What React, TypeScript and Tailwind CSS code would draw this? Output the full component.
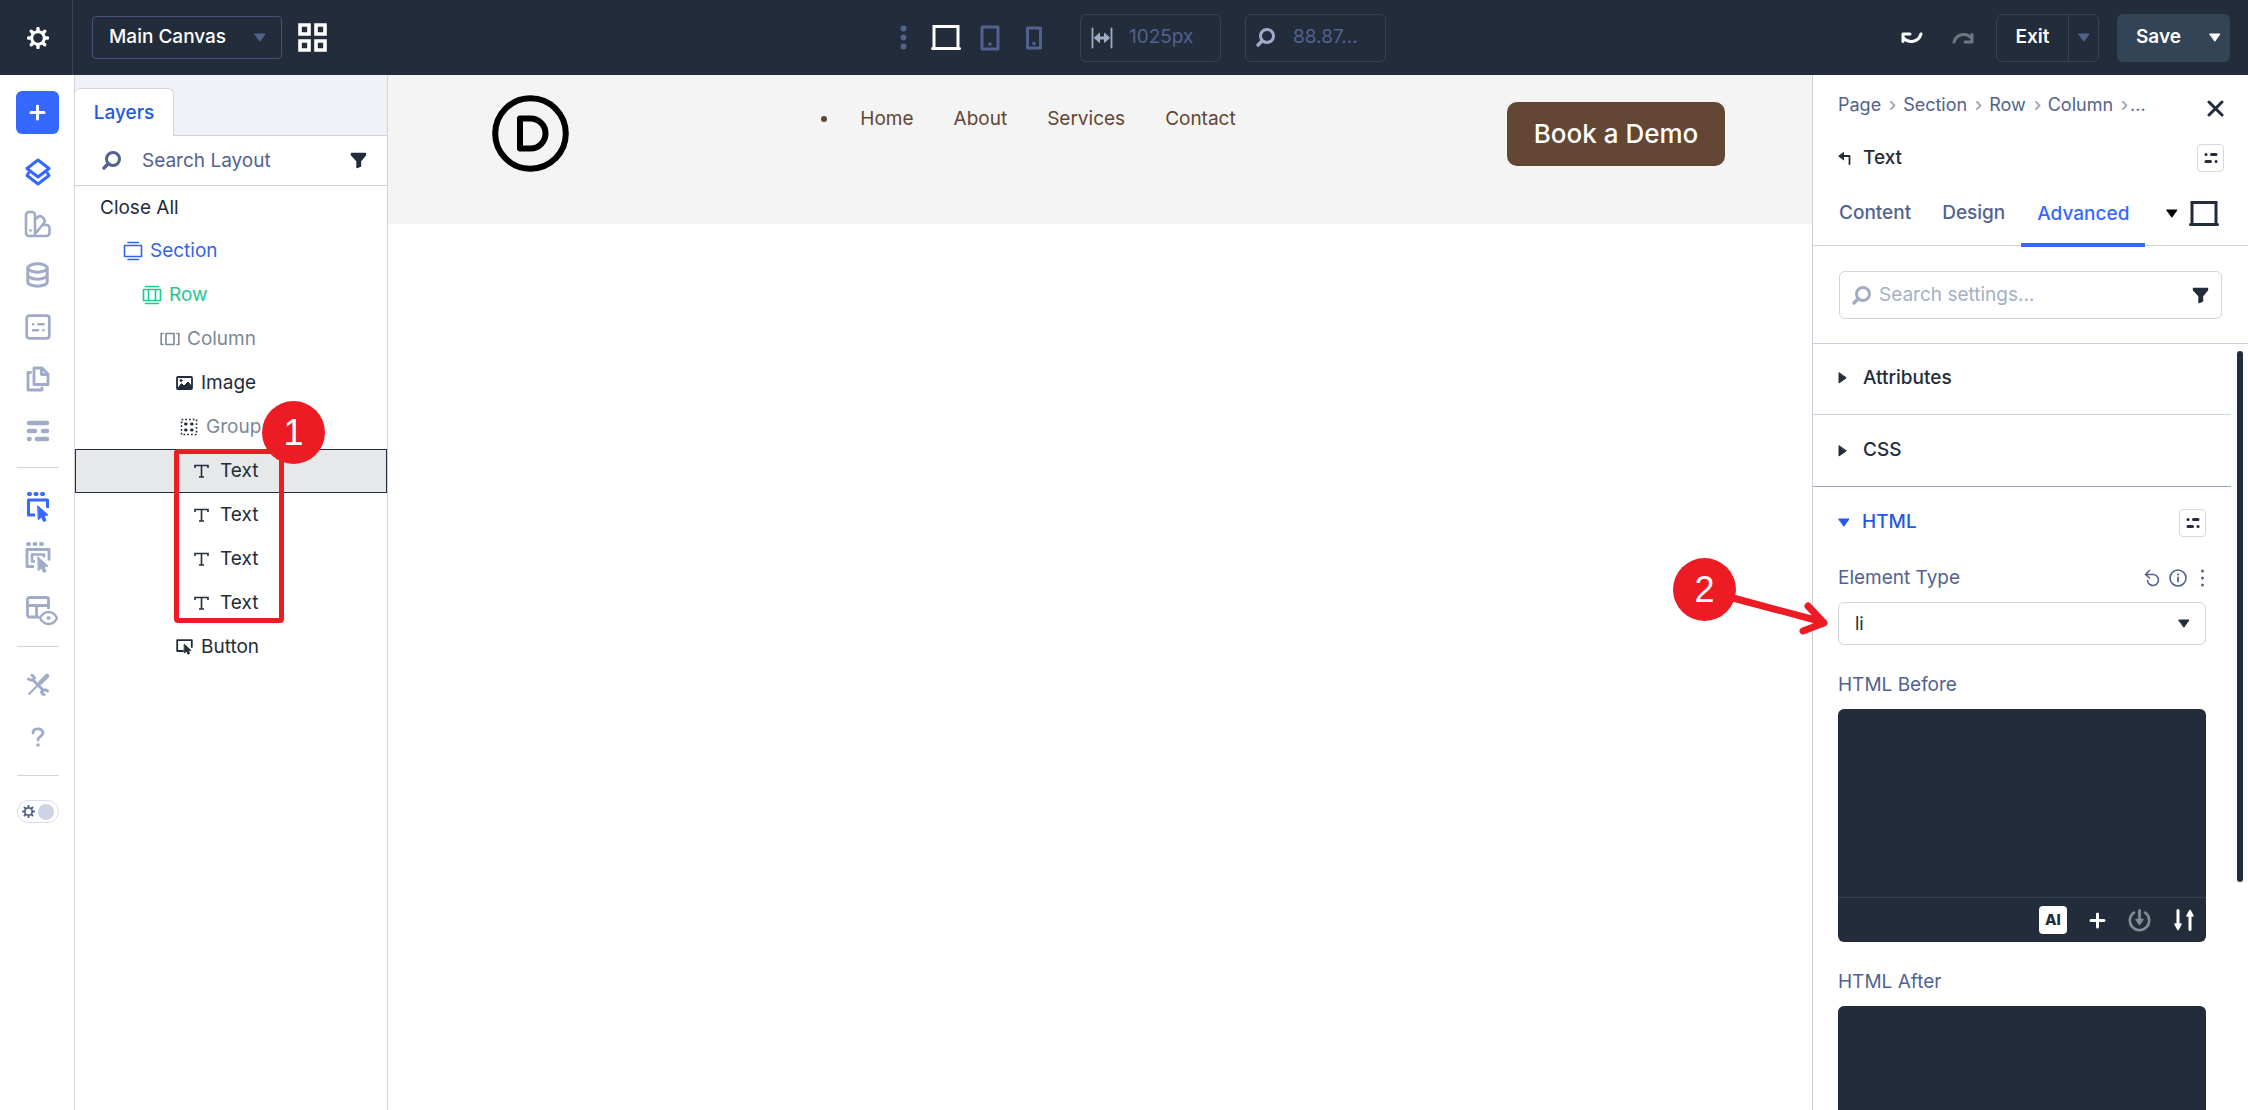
import type { ReactNode } from 'react';

interface IconProps {
  w?: number;
  h?: number;
  box: string;
  className?: string;
  children: ReactNode;
}

const Icon = ({ w = 22, h = w, box, className = '', children }: IconProps) => (
  <svg
    width={w}
    height={h}
    viewBox={box}
    fill="none"
    stroke="currentColor"
    strokeWidth={3}
    strokeLinejoin="round"
    strokeLinecap="round"
    className={`shrink-0 ${className}`}
    aria-hidden="true"
  >
    {children}
  </svg>
);

const Caret = ({ className = '' }: { className?: string }) => (
  <Icon w={12} h={9} box="0 0 12 9" className={className}>
    <path d="M1 1h10L6 8z" fill="currentColor" strokeWidth={1} />
  </Icon>
);

const CaretRight = () => (
  <Icon w={9} h={12} box="0 0 9 12">
    <path d="M1 1v10l7-5z" fill="currentColor" strokeWidth={1} />
  </Icon>
);

const SearchIcon = ({ className = '' }: { className?: string }) => (
  <Icon w={19} box="0 0 19 19" className={className}>
    <circle cx="11" cy="8" r="6.5" />
    <path d="M6 13l-4 4" strokeWidth={3.4} />
  </Icon>
);

const Funnel = ({ className = '' }: { className?: string }) => (
  <Icon w={17} box="0 0 17 17" className={className}>
    <path d="M1.500 1.500h14v1.500L10.500 9v5L7 15.500V9L1.500 3z" fill="currentColor" strokeWidth={1.400} />
  </Icon>
);

const Laptop = () => (
  <Icon w={30} h={27} box="0 0 30 27">
    <path d="M3 24V2.500h24V24M1.500 24.500h27" strokeLinejoin="miter" />
  </Icon>
);

const Gear = ({ size = 22 }: { size?: number }) => (
  <Icon w={size} box="0 0 22 22">
    <circle cx="11" cy="11" r="6.300" />
    <path
      d="M11 1.500v2M11 18.500v2M1.500 11h2M18.500 11h2M4.300 4.300l1.400 1.400M16.300 16.300l1.400 1.400M4.300 17.700l1.400-1.400M16.300 5.700l1.400-1.400"
      strokeWidth={3.400}
    />
  </Icon>
);

const PresetIcon = () => (
  <Icon w={14} h={12} box="0 0 14 12">
    <path d="M2 2.500h.1M7.500 2.500h4.500M2 9.500h4.500M12 9.500h.1" />
  </Icon>
);

const Chevron = () => (
  <Icon w={6} h={9} box="0 0 6 9" className="text-[#a3adc2]">
    <path d="M1 1l3.500 3.500L1 8" strokeWidth={2} />
  </Icon>
);

const Plus = () => (
  <Icon w={17} box="0 0 17 17">
    <path d="M8.500 2v13M2 8.500h13" />
  </Icon>
);

const TextIcon = () => (
  <Icon w={15} h={14} box="0 0 15 14">
    <path d="M1 4V1.500h13V4M7.500 1.500v11M5 13h5" strokeWidth={1.600} strokeLinejoin="miter" strokeLinecap="butt" />
  </Icon>
);

const layers = [
  {
    name: 'Section',
    pad: 'pl-12',
    gap: 'gap-[7px]',
    color: 'text-[#3563e9]',
    icon: (
      <Icon w={20} box="0 0 20 20">
        <path d="M5 1.500h10.500M5 18.500h10.500M1.500 4.500h17v11h-17z" strokeWidth={1.600} />
      </Icon>
    ),
  },
  {
    name: 'Row',
    pad: 'pl-[67px]',
    gap: 'gap-[7px]',
    color: 'text-[#1ec98e]',
    icon: (
      <Icon w={20} box="0 0 20 20">
        <path d="M3.500 1.500h13M3.500 18.500h13M1.500 4.500h17v11h-17zM6.500 4.500v11M13.500 4.500v11" strokeWidth={1.600} />
      </Icon>
    ),
  },
  {
    name: 'Column',
    pad: 'pl-[85px]',
    gap: 'gap-[7px]',
    color: 'text-[#7d8899]',
    icon: (
      <Icon w={20} h={14} box="0 0 20 14">
        <path d="M3 1.500H1.200v11H3M17 1.500h1.800v11H17M6 1.500h8v11H6z" strokeWidth={1.600} />
      </Icon>
    ),
  },
  {
    name: 'Image',
    pad: 'pl-[101px]',
    gap: 'gap-2',
    color: 'text-[#232c3a]',
    icon: (
      <Icon w={17} h={14} box="0 0 17 14">
        <rect x="1" y="1" width="15" height="12" rx="1" strokeWidth={1.800} />
        <path d="M2 12l3.500-4.500L8 10l4-4 3.500 4v2z" fill="currentColor" strokeWidth={1} />
        <circle cx="5" cy="4.500" r="1" fill="currentColor" strokeWidth={1} />
      </Icon>
    ),
  },
  {
    name: 'Group',
    pad: 'pl-[105px]',
    gap: 'gap-2',
    color: 'text-[#7d8899]',
    icon: (
      <Icon w={18} box="0 0 18 18" className="text-[#232c3a]">
        <rect x="1.500" y="1.500" width="15" height="15" strokeWidth={1.600} strokeDasharray="1.750 2" strokeLinecap="butt" />
        <path d="M5 5h2v2H5zM11 5h2v2h-2zM5 11h2v2H5zM11 11h2v2h-2z" fill="currentColor" strokeWidth={0.800} />
      </Icon>
    ),
  },
];

const railIcons: { label: string; active?: boolean; height: string; icon: ReactNode }[] = [
  {
    label: 'Layers',
    active: true,
    height: 'h-[52px]',
    icon: (
      <Icon w={26} h={28} box="0 0 26 28">
        <path d="M13 2l11 8.500L13 19 2 10.500z" />
        <path d="M3.500 15L2 17.500 13 26l11-8.500-1.500-2.500" />
      </Icon>
    ),
  },
  {
    label: 'Design variables',
    height: 'h-[51px]',
    icon: (
      <Icon w={28} box="0 0 28 28">
        <path d="M2 5a3 3 0 0 1 3-3h3a3 3 0 0 1 3 3v21H5a3 3 0 0 1-3-3zM11 9.500l3-2.500a3 3 0 0 1 4 0l2 2a3 3 0 0 1 0 4L11 24M19 15h3.500a3 3 0 0 1 3 3v5a3 3 0 0 1-3 3H11" strokeWidth={2.600} />
        <circle cx="6.500" cy="20.500" r="1" fill="currentColor" strokeWidth={1} />
      </Icon>
    ),
  },
  {
    label: 'Data',
    height: 'h-[52px]',
    icon: (
      <Icon w={23} h={26} box="0 0 23 26">
        <ellipse cx="11.500" cy="6" rx="9.700" ry="4.200" />
        <path d="M1.800 6v14c0 2.300 4.300 4.200 9.700 4.200s9.700-1.900 9.700-4.200V6M1.800 13c0 2.300 4.300 4.200 9.700 4.200s9.700-1.900 9.700-4.200" />
      </Icon>
    ),
  },
  {
    label: 'Presets',
    height: 'h-[52px]',
    icon: (
      <Icon w={26} box="0 0 26 26">
        <rect x="1.700" y="1.700" width="22.600" height="22.600" rx="2.500" strokeWidth={2.800} />
        <path d="M8 10.300h.1M13.500 10.300h5M8 16.300h5M18.300 16.300h.1" strokeWidth={2.600} />
      </Icon>
    ),
  },
  {
    label: 'Pages',
    height: 'h-[51px]',
    icon: (
      <Icon w={24} h={26} box="0 0 24 26">
        <path d="M8 2h8l6 6v10.500H8zM15.500 2.500V8.500H22" strokeWidth={2.800} />
        <path d="M4.500 6.500H2V24h14v-2" strokeWidth={2.800} />
      </Icon>
    ),
  },
  {
    label: 'Wireframe',
    height: 'h-[53px]',
    icon: (
      <Icon w={24} box="0 0 24 24">
        <path d="M3 4h18M3 12h6M17 12h4M3 20h.5M11 20h10" strokeWidth={4.600} />
      </Icon>
    ),
  },
];

const HoverSelect = () => (
  <Icon w={24} h={32} box="0 0 24 32">
    <path d="M3 3h1M9.500 3h1M16 3h1" strokeWidth={4} />
    <path d="M9 24H2.500V9h19v8" strokeLinecap="butt" />
    <path d="M12 15l10 9-4 .5 2 5-2.500 1-2-4.500-3 2.500z" fill="currentColor" strokeWidth={1} />
  </Icon>
);

const HoverParent = () => (
  <Icon w={26} h={33} box="0 0 26 33">
    <path d="M3 3h1M9.500 3h1M16 3h1" strokeWidth={4} />
    <path d="M9 25.500H2V8.500h22v11" strokeWidth={2.800} strokeLinecap="butt" />
    <path d="M10 20.500H7v-7h12v3" strokeWidth={2.600} strokeLinecap="butt" />
    <path d="M13 16l10 9-4 .5 2 5-2.500 1-2-4.500-3 2.500z" fill="currentColor" strokeWidth={1} />
  </Icon>
);

const LayoutEye = () => (
  <Icon w={32} h={30} box="0 0 32 30">
    <path d="M12 21H3.500a2 2 0 0 1-2-2V3.500a2 2 0 0 1 2-2h17a2 2 0 0 1 2 2V12M1.500 9.500h21M10.500 9.500V21" strokeWidth={2.800} />
    <path d="M14 22c2-4 5-6 8.500-6s6.500 2 8.500 6c-2 4-5 6-8.500 6s-6.500-2-8.500-6z" strokeWidth={2.400} />
    <circle cx="22.500" cy="22" r="1.500" fill="currentColor" strokeWidth={1} />
  </Icon>
);

const Tools = () => (
  <Icon w={24} box="0 0 24 24">
    <path d="M21 3L10 14M3 21l7-7" strokeWidth={2} />
    <path d="M21 3l-6.500 6.500" strokeWidth={4.500} />
    <path d="M7.500 7.500L17 17" strokeWidth={3} />
    <path d="M2.500 6a3.800 3.800 0 0 0 6-1A3.800 3.800 0 0 0 6 2.300M21.500 18a3.800 3.800 0 0 0-6 1 3.800 3.800 0 0 0 2.500 2.700" strokeWidth={3} />
  </Icon>
);

const Rail = () => (
  <nav className="flex w-[75px] shrink-0 flex-col items-center border-r border-[#d0d4dd] bg-white pt-4 pl-px text-[#a0abc8]">
    <button aria-label="Add" className="flex h-[43px] w-[43px] items-center justify-center rounded-md bg-[#3468ff] text-white">
      <Plus />
    </button>
    <div className="mt-3 flex flex-col">
      {railIcons.map((item) => (
        <button
          key={item.label}
          aria-label={item.label}
          className={`flex w-12 items-center justify-center ${item.height} ${item.active ? 'text-[#3468ff]' : ''}`}
        >
          {item.icon}
        </button>
      ))}
    </div>
    <hr className="mt-[10px] w-[42px] border-[#d0d4dd]" />
    <div className="mt-3 flex flex-col items-center">
      <button aria-label="Click mode" className="flex h-[54px] items-center text-[#3468ff]">
        <HoverSelect />
      </button>
      <button aria-label="Grid mode" className="flex h-[46px] items-center">
        <HoverParent />
      </button>
      <button aria-label="Preview mode" className="flex h-[62px] items-center pl-2">
        <LayoutEye />
      </button>
    </div>
    <hr className="mt-1 w-[42px] border-[#d0d4dd]" />
    <button aria-label="Tools" className="mt-3 flex h-[52px] items-center">
      <Tools />
    </button>
    <button aria-label="Help" className="flex h-[52px] items-center">
      <Icon w={14} h={20} box="0 0 14 20">
        <path d="M2 6c0-2.600 2-4.200 5-4.200s5 1.700 5 4.200c0 3.300-5 3.500-5 7" strokeWidth={2.800} />
        <path d="M7 18h.1" strokeWidth={3.400} />
      </Icon>
    </button>
    <hr className="mt-3 w-[42px] border-[#d0d4dd]" />
    <label className="mt-6 flex h-[23px] w-[42px] items-center justify-between rounded-full border border-[#d8dce6] px-1 text-[#52628f]">
      <input type="checkbox" aria-label="Dark mode" className="sr-only" />
      <Gear size={13} />
      <span className="h-4 w-4 rounded-full bg-[#ccd4e6]" />
    </label>
  </nav>
);

const LayersPanel = () => (
  <aside className="flex w-[313px] shrink-0 flex-col border-r border-[#d0d4dd] bg-white">
    <div className="flex h-[61px] items-end bg-[#f0f2f7]">
      <button className="h-12 w-[99px] rounded-t-md border-t border-r border-[#d0d4dd] bg-white pt-0.5 text-[19px] font-medium text-[#2558e0]">
        Layers
      </button>
      <div className="flex-1 self-stretch border-b border-[#d0d4dd]" />
    </div>
    <label className="flex h-[50px] items-center border-b border-[#c9ced8] pr-5 pl-[27px]">
      <SearchIcon className="text-[#52628f]" />
      <input
        aria-label="Search Layout"
        placeholder="Search Layout"
        className="ml-[21px] min-w-0 flex-1 pt-0.5 text-[19px] outline-none placeholder:text-[#52628f]"
      />
      <Funnel className="text-[#232c3a]" />
    </label>
    <div className="flex flex-col text-[19px] text-[#232c3a]">
      <button className="h-[43px] pt-0.5 pl-[25px] text-left">Close All</button>
      {layers.map((layer) => (
        <button key={layer.name} className={`flex h-11 items-center ${layer.pad} ${layer.gap} ${layer.color}`}>
          {layer.icon}
          {layer.name}
        </button>
      ))}
      <div className="relative flex flex-col">
        {[0, 1, 2, 3].map((i) => (
          <button
            key={i}
            className={`flex h-11 items-center gap-[11px] border pl-[118px] ${i === 0 ? 'border-[#232c3a] bg-[#e6e8ea]' : 'border-transparent'}`}
          >
            <TextIcon />
            Text
          </button>
        ))}
        <div className="pointer-events-none absolute top-0 left-[99px] h-[174px] w-[110px] rounded-sm border-[5px] border-[#ed1c24]" />
        <div className="absolute -top-12 left-[187px] flex h-[63px] w-[63px] items-center justify-center rounded-full bg-[#ed1c24] font-['Liberation_Sans',sans-serif] text-[36px] text-white">
          1
        </div>
      </div>
      <button className="flex h-11 items-center gap-2 pl-[101px]">
        <Icon w={17} h={16} box="0 0 17 16">
          <path d="M7 12H1.200V1.200h14.600V8" strokeWidth={1.800} />
          <path d="M8.500 5.500l6.500 6-2.700.3 1.200 2.800-1.500.6-1.300-3-2.200 1.500z" fill="currentColor" strokeWidth={1} />
        </Icon>
        Button
      </button>
    </div>
  </aside>
);

const Canvas = () => (
  <main className="min-w-0 flex-1 bg-white">
    <header className="flex items-center justify-between bg-[#f4f4f4] pt-5 pr-[87px] pb-[52px] pl-[104px]">
      <svg width="77" height="77" viewBox="0 0 77 77" fill="none" stroke="#000" strokeWidth="6" aria-label="Logo">
        <circle cx="38.500" cy="38.500" r="35.300" />
        <path d="M28 23.500h10.500a15 15 0 0 1 0 30H28z" strokeWidth="6" strokeLinejoin="round" />
      </svg>
      <ul className="flex gap-10 self-start py-3 text-[19px] leading-6 text-[#634633]">
        <li className="list-disc pl-5">
          <a href="#home">Home</a>
        </li>
        <li className="list-none">
          <a href="#about">About</a>
        </li>
        <li className="list-none">
          <a href="#services">Services</a>
        </li>
        <li className="list-none">
          <a href="#contact">Contact</a>
        </li>
      </ul>
      <a href="#demo" className="flex h-16 w-[218px] items-center justify-center rounded-[10px] bg-[#634633] text-[26px] font-medium text-white">
        Book a Demo
      </a>
    </header>
  </main>
);

const CodeToolbar = () => (
  <div className="flex h-[45px] items-center justify-end gap-[22px] border-t border-[#37414f] pr-[11px] text-white">
    <button aria-label="AI" className="h-7 w-7 rounded bg-white text-[15px] leading-7 font-extrabold text-[#232c3a]">
      AI
    </button>
    <button aria-label="Add">
      <Plus />
    </button>
    <button aria-label="Save" className="text-[#858b94]">
      <Icon w={23} box="0 0 23 23">
        <path d="M6 3.500a9.700 9.700 0 1 0 11 0" strokeWidth={2.600} />
        <path d="M11.500 1.500v10" strokeWidth={2.800} />
        <path d="M8 10.500h7l-3.500 5z" fill="currentColor" strokeWidth={1.400} />
      </Icon>
    </button>
    <button aria-label="Sort">
      <Icon w={22} h={24} box="0 0 22 24">
        <path d="M5 2.500v14M17 21.500v-14" />
        <path d="M2 16h6l-3 5.500zM14 8h6l-3-5.500z" fill="currentColor" strokeWidth={1.600} />
      </Icon>
    </button>
  </div>
);

const CodeField = ({ label, id, toolbar = false }: { label: string; id: string; toolbar?: boolean }) => (
  <div className="flex flex-col">
    <label htmlFor={id} className="text-[19px] leading-6">
      {label}
    </label>
    <div className="mt-3 rounded-md bg-[#232c3a]">
      <textarea id={id} className="block h-[188px] w-full resize-none p-3 text-white outline-none" />
      {toolbar && <CodeToolbar />}
    </div>
  </div>
);

const crumbs = ['Page', 'Section', 'Row', 'Column'];

const SettingsPanel = () => (
  <aside className="flex w-[436px] shrink-0 flex-col border-l border-[#c9ced8] bg-white text-[#52628f]">
    <div className="flex items-start justify-between pt-[18px] pr-6 pl-[25px]">
      <div className="flex items-center text-lg leading-6">
        {crumbs.map((crumb) => (
          <div key={crumb} className="flex items-center">
            <a href="#layer">{crumb}</a>
            <span className={crumb === 'Column' ? 'pr-0.5 pl-[9px]' : 'pr-[7px] pl-[9px]'}>
              <Chevron />
            </span>
          </div>
        ))}
        <span>...</span>
      </div>
      <button aria-label="Close" className="mt-[7px] text-[#232c3a]">
        <Icon w={17} box="0 0 17 17">
          <path d="M2 2l13 13M15 2L2 15" />
        </Icon>
      </button>
    </div>
    <div className="mt-[27px] flex items-center justify-between pr-6 pl-[25px] text-[#232c3a]">
      <h2 className="flex items-center gap-3 text-[19px] leading-7 font-medium">
        <Icon w={13} h={14} box="0 0 13 14">
          <path d="M2 5h9.500v8" strokeWidth={1.800} />
          <path d="M1 5l4.500-3.500v7z" fill="currentColor" strokeWidth={1} />
        </Icon>
        Text
      </h2>
      <button aria-label="Presets" className="flex h-7 w-[27px] items-center justify-center rounded border border-[#d3d8e2]">
        <PresetIcon />
      </button>
    </div>
    <div className="mt-2 flex h-[66px] border-b border-[#d0d4dd] pr-[29px] pl-[26px] text-[19px] font-medium">
      <button className="pt-0.5">Content</button>
      <button className="ml-[31px] pt-0.5">Design</button>
      <button className="-mb-0.5 ml-4 border-b-4 border-[#3468ff] px-4 pt-1.5 text-[#3468ff]">Advanced</button>
      <button aria-label="Device" className="ml-auto flex items-center gap-[11px] pt-0.5 text-[#232c3a]">
        <Caret className="text-black" />
        <Laptop />
      </button>
    </div>
    <div className="border-b border-[#c9ced8] pt-[25px] pr-[26px] pb-6 pl-[26px]">
      <label className="flex h-12 items-center rounded-md border border-[#d0d4dd] px-3 text-[#a3adc2]">
        <SearchIcon />
        <input
          aria-label="Search settings"
          placeholder="Search settings..."
          className="ml-2 min-w-0 flex-1 text-[19px] outline-none placeholder:text-[#a3b0c8]"
        />
        <Funnel className="text-[#232c3a]" />
      </label>
    </div>
    <div className="flex min-h-0 flex-1">
      <div className="min-w-0 flex-1">
        <button className="flex h-[71px] w-full items-center gap-4 border-b border-[#d0d4dd] pb-0.5 pl-[25px] text-[19px] font-medium text-[#232c3a]">
          <CaretRight />
          Attributes
        </button>
        <button className="flex h-[72px] w-full items-center gap-4 border-b border-[#9ba3b0] pl-[25px] text-[19px] font-medium text-[#232c3a]">
          <CaretRight />
          CSS
        </button>
        <div className="flex h-[71px] items-center justify-between pr-[25px] pl-[25px]">
          <button className="flex items-center gap-3 text-[19px] font-medium text-[#2558e0]">
            <Caret />
            HTML
          </button>
          <button
            aria-label="HTML presets"
            className="flex h-7 w-[27px] items-center justify-center rounded border border-[#d3d8e2] text-[#232c3a]"
          >
            <PresetIcon />
          </button>
        </div>
        <div className="flex flex-col gap-7 px-[25px] pt-2">
          <div>
            <div className="flex items-center text-[19px] leading-6">
              <label htmlFor="element-type">Element Type</label>
              <button aria-label="Reset" className="ml-auto">
                <Icon w={16} h={18} box="0 0 16 18">
                  <path d="M2 5.500h7a5.500 5.500 0 1 1-5.500 6M5.500 1.500L1.500 5.500l4 3.500" strokeWidth={1.600} />
                </Icon>
              </button>
              <button aria-label="Info" className="ml-[9px]">
                <Icon w={18} box="0 0 18 18">
                  <circle cx="9" cy="9" r="8" strokeWidth={1.600} />
                  <path d="M9 8.500v4" strokeWidth={1.800} />
                  <path d="M9 5.500h.1" strokeWidth={2} />
                </Icon>
              </button>
              <button aria-label="More" className="mr-px ml-[13px]">
                <Icon w={5} h={18} box="0 0 5 18">
                  <path d="M2.500 2v.1M2.500 9v.1M2.500 16v.1" />
                </Icon>
              </button>
            </div>
            <div className="relative mt-3 text-[#232c3a]">
              <select
                id="element-type"
                className="h-[43px] w-full appearance-none rounded-md border border-[#d0d4dd] px-4 text-lg outline-none"
              >
                <option>li</option>
              </select>
              <Caret className="pointer-events-none absolute top-[17px] right-4" />
              <div className="absolute -top-11 -left-[165px] flex h-[63px] w-[63px] items-center justify-center rounded-full bg-[#ed1c24] font-['Liberation_Sans',sans-serif] text-[36px] text-white">
                2
              </div>
              <svg
                width="102"
                height="44"
                viewBox="0 0 102 44"
                fill="none"
                stroke="#ed1c24"
                strokeWidth="7"
                strokeLinecap="round"
                strokeLinejoin="round"
                className="pointer-events-none absolute -top-2 -left-[108px]"
                aria-hidden="true"
              >
                <path d="M3 4l90 24M78 12l16 17-21 8" />
              </svg>
            </div>
          </div>
          <CodeField label="HTML Before" id="html-before" toolbar />
          <CodeField label="HTML After" id="html-after" />
        </div>
      </div>
      <div className="w-[17px] shrink-0 pt-[7px] pl-[6px]">
        <div className="h-[531px] w-[6px] rounded-full bg-[#232c3a]" />
      </div>
    </div>
  </aside>
);

const TopBar = () => (
  <header className="flex h-[75px] shrink-0 items-center bg-[#232c3a] text-white">
    <div className="flex flex-1 items-center self-stretch">
      <button aria-label="Settings" className="flex w-[73px] items-center justify-center self-stretch border-r border-[#3b4558] pl-1">
        <Gear />
      </button>
      <div className="relative ml-[19px]">
        <select
          aria-label="Canvas"
          className="h-[43px] w-[190px] appearance-none rounded border border-[#46527a] px-4 text-[19px] font-medium outline-none"
        >
          <option>Main Canvas</option>
        </select>
        <Caret className="pointer-events-none absolute top-[17px] right-4 text-[#52628f]" />
      </div>
      <button aria-label="Grid" className="ml-4">
        <Icon w={29} box="0 0 29 29">
          <path d="M2 2h9v9H2zM18 2h9v9h-9zM2 18h9v9H2zM18 18h9v9h-9z" strokeWidth={3.600} strokeLinejoin="miter" />
        </Icon>
      </button>
    </div>
    <div className="flex items-center pl-14 text-[#52628f]">
      <button aria-label="More">
        <Icon w={7} h={25} box="0 0 7 25">
          <path d="M3.500 3.500v.1M3.500 12.500v.1M3.500 21.500v.1" strokeWidth={6} />
        </Icon>
      </button>
      <button aria-label="Desktop" className="ml-6 text-white">
        <Laptop />
      </button>
      <button aria-label="Tablet" className="ml-[19px]">
        <Icon w={20} h={26} box="0 0 20 26">
          <path d="M2 2h16v22H2z" />
          <path d="M10 19v.1" strokeWidth={3.600} />
        </Icon>
      </button>
      <button aria-label="Phone" className="ml-[25px]">
        <Icon w={18} h={24} box="0 0 18 24">
          <path d="M2.500 2h13v20h-13z" />
          <path d="M9 17.500v.1" strokeWidth={3.600} />
        </Icon>
      </button>
      <label className="ml-[37px] flex h-12 w-[141px] items-center rounded-md border border-[#37414f] px-[10px]">
        <Icon w={22} box="0 0 22 22" className="text-[#a0abc8]">
          <path d="M1.500 1.500v19M20.500 1.500v19" strokeWidth={1.800} />
          <path d="M6 11h10" />
          <path d="M8.500 6.500v9L3.500 11zM13.500 6.500v9l5-4.500z" fill="currentColor" strokeWidth={1} />
        </Icon>
        <input aria-label="Width" defaultValue="1025px" className="ml-4 w-full min-w-0 text-[19px] outline-none" />
      </label>
      <label className="ml-6 flex h-12 w-[141px] items-center rounded-md border border-[#37414f] px-[10px]">
        <SearchIcon className="text-[#a0abc8]" />
        <input aria-label="Zoom" defaultValue="88.87..." className="ml-[18px] w-full min-w-0 text-[19px] outline-none" />
      </label>
    </div>
    <div className="flex flex-1 items-center justify-end pr-[18px]">
      <button aria-label="Undo">
        <Icon w={22} h={12} box="0 0 22 12">
          <path d="M20 2c-2.500 8-12 10-17.500 4M2 9.500V2h7" />
        </Icon>
      </button>
      <button aria-label="Redo" className="ml-[29px] text-[#6f7681]">
        <Icon w={22} h={12} box="0 0 22 12">
          <path d="M2 10c2.500-8 12-10 17.500-4M20 2.500V10h-7" />
        </Icon>
      </button>
      <div className="ml-[22px] flex h-12 w-[103px] rounded-md border border-[#37414f]">
        <button className="flex-1 text-[19px] font-semibold">Exit</button>
        <button aria-label="Exit options" className="flex w-[30px] items-center justify-center border-l border-[#37414f] text-[#52628f]">
          <Caret />
        </button>
      </div>
      <div className="ml-[18px] flex h-12 w-[113px] rounded-md bg-[#344457]">
        <button className="flex-1 text-[19px] font-semibold">Save</button>
        <button aria-label="Save options" className="flex w-[30px] items-center justify-center">
          <Caret />
        </button>
      </div>
    </div>
  </header>
);

export default function App() {
  return (
    <div className="flex h-screen flex-col overflow-hidden bg-white font-['Inter',sans-serif]">
      <TopBar />
      <div className="flex min-h-0 flex-1">
        <Rail />
        <LayersPanel />
        <Canvas />
        <SettingsPanel />
      </div>
    </div>
  );
}
